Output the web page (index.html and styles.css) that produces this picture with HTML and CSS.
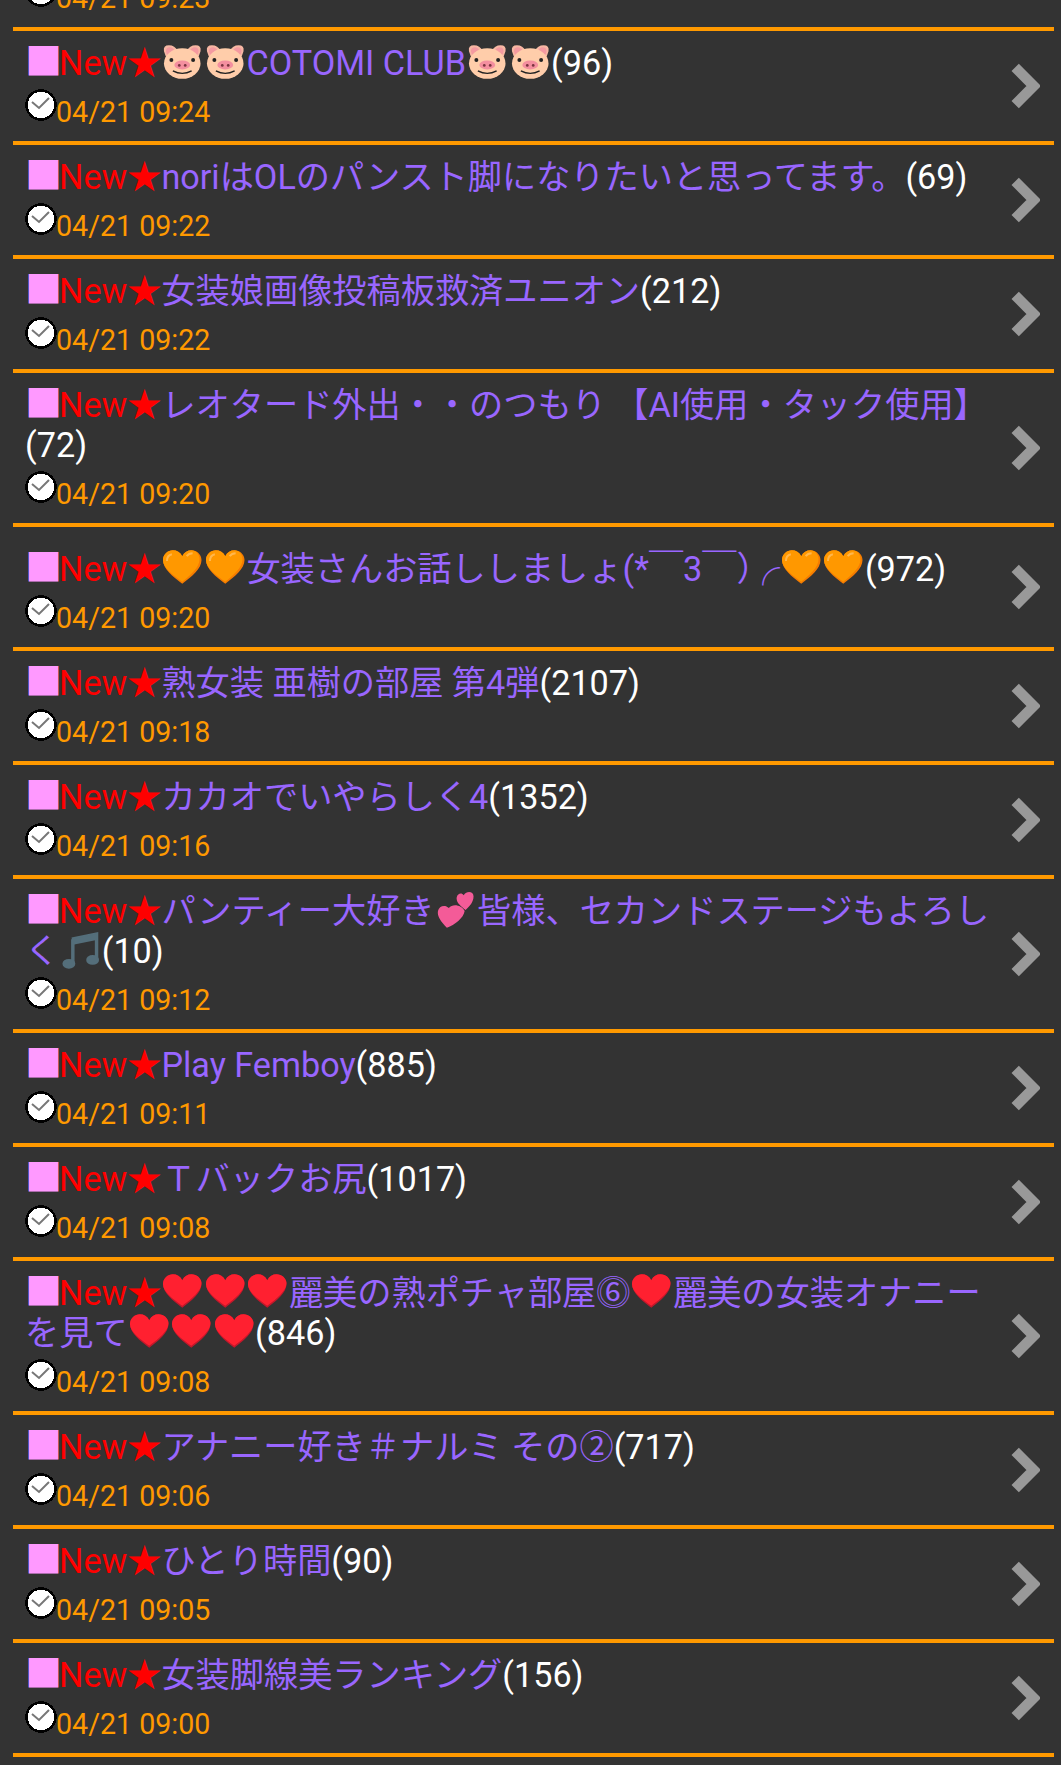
FILE: index.html
```html
<!DOCTYPE html>
<html lang="ja">
<head>
  <meta charset="UTF-8">
  <meta name="viewport" content="width=device-width, initial-scale=1.0">
  <title>New threads</title>
  <link rel="stylesheet" href="styles.css">
</head>
<body>
  <svg class="sprites" xmlns="http://www.w3.org/2000/svg">
    <symbol id="clock" viewBox="0 0 32 32">
      <circle cx="16" cy="16" r="14.500" fill="#fff" stroke="#000" stroke-width="2.500" shape-rendering="crispEdges"/>
      <path d="M7 13 L14 19 L24 9" fill="none" stroke="#777" stroke-width="2"/>
    </symbol>
    <symbol id="chevron" viewBox="0 0 29 46">
      <path d="M5 5 L23 23 L5 41" fill="none" stroke="#999" stroke-width="10" stroke-linejoin="miter"/>
    </symbol>
    <symbol id="pig" viewBox="0 0 43 38">
      <path d="M3 8 Q2 2 8 2 Q14 2 17 8 L8 18 Q4 13 3 8Z M40 8 Q41 2 35 2 Q29 2 26 8 L35 18 Q39 13 40 8Z" fill="#f7b7a3"/>
      <path d="M5 8 Q5 4 9 4 Q12 4 14 8 L8 13 Q5 11 5 8Z M38 8 Q38 4 34 4 Q31 4 29 8 L35 13 Q38 11 38 8Z" fill="#f49aa0"/>
      <ellipse cx="21.500" cy="20.500" rx="18.500" ry="15.500" fill="#ffcdaa"/>
      <ellipse cx="21.500" cy="22" rx="8" ry="4.500" fill="#f48f9f"/>
      <circle cx="18.500" cy="22.500" r="1.400" fill="#7a3440"/>
      <circle cx="24.500" cy="22.500" r="1.400" fill="#7a3440"/>
      <circle cx="10.500" cy="17" r="2" fill="#222"/>
      <circle cx="32.500" cy="17" r="2" fill="#222"/>
      <path d="M12 28 Q21.500 33 31 28" fill="none" stroke="#222" stroke-width="1.400"/>
    </symbol>
    <symbol id="heart-orange" viewBox="0 0 43 38">
      <path d="M21.500 35 C12 28 2 20 2 11 C2 5 7 1 12 1 C16 1 19.500 3 21.500 7 C23.500 3 27 1 31 1 C36 1 41 5 41 11 C41 20 31 28 21.500 35Z" fill="#f57c00"/>
      <path d="M21.500 33 C12 26 2 19 2 11 C2 5 7 1 12 1 C16 1 19.500 3 21.500 7 C23.500 3 27 1 31 1 C35 1 39 5 39 10 C39 19 30 26 21.500 33Z" fill="#ff9800"/>
      <path d="M6 12 Q6 6 11 5" fill="none" stroke="#ffb74d" stroke-width="2"/>
      <path d="M26 7 Q28 4 32 4" fill="none" stroke="#ffb74d" stroke-width="2"/>
    </symbol>
    <symbol id="heart-red" viewBox="0 0 43 38">
      <path d="M21.500 35 C12 28 2 20 2 11 C2 5 7 1 12 1 C16 1 19.500 3 21.500 7 C23.500 3 27 1 31 1 C36 1 41 5 41 11 C41 20 31 28 21.500 35Z" fill="#c2182b"/>
      <path d="M21.500 33 C12 26 2 19 2 11 C2 5 7 1 12 1 C16 1 19.500 3 21.500 7 C23.500 3 27 1 31 1 C36 1 41 5 41 10 C41 18 31 26 21.500 33Z" fill="#ff2030"/>
    </symbol>
    <symbol id="hearts" viewBox="0 0 43 38">
      <path d="M12 37 C6 31 2 25 3 20 C4 15 10 13 14 17 C18 12 27 14 30 20 C29 27 20 34 12 37Z" fill="#f45b98"/>
      <path d="M31 19 C26 15 21 11 22 6 C23 2 27 1 29 4 C32 -1 39 0 39 5 C39 11 35 15 31 19Z" fill="#f45b98"/>
    </symbol>
    <symbol id="notes" viewBox="0 0 43 38">
      <path d="M13 8 L38 3 V29" fill="none" stroke="#546e7a" stroke-width="3.500"/>
      <path d="M13 8 L38 3 V9 L13 14Z" fill="#546e7a"/>
      <path d="M14 8 V33" fill="none" stroke="#546e7a" stroke-width="3.500"/>
      <ellipse cx="10" cy="33" rx="6.500" ry="5" fill="#546e7a"/>
      <ellipse cx="34" cy="29" rx="6.500" ry="5" fill="#546e7a"/>
    </symbol>
  </svg>

  <ul class="thread-list">
    <li class="thread">
      <div class="thread-body">
        <p class="thread-time"><svg class="clock"><use href="#clock"/></svg>04/21 09:23</p>
      </div>
    </li>
    <li class="thread">
      <div class="thread-body">
        <p class="thread-title"><span class="mark">■</span><span class="new">New★</span><span class="name"><svg class="emoji"><use href="#pig"/></svg><svg class="emoji"><use href="#pig"/></svg>COTOMI CLUB<svg class="emoji"><use href="#pig"/></svg><svg class="emoji"><use href="#pig"/></svg></span><span class="count">(96)</span></p>
        <p class="thread-time"><svg class="clock"><use href="#clock"/></svg>04/21 09:24</p>
      </div>
      <svg class="chevron"><use href="#chevron"/></svg>
    </li>
    <li class="thread">
      <div class="thread-body">
        <p class="thread-title"><span class="mark">■</span><span class="new">New★</span><span class="name">noriはOLのパンスト脚になりたいと思ってます。</span><span class="count">(69)</span></p>
        <p class="thread-time"><svg class="clock"><use href="#clock"/></svg>04/21 09:22</p>
      </div>
      <svg class="chevron"><use href="#chevron"/></svg>
    </li>
    <li class="thread">
      <div class="thread-body">
        <p class="thread-title"><span class="mark">■</span><span class="new">New★</span><span class="name">女装娘画像投稿板救済ユニオン</span><span class="count">(212)</span></p>
        <p class="thread-time"><svg class="clock"><use href="#clock"/></svg>04/21 09:22</p>
      </div>
      <svg class="chevron"><use href="#chevron"/></svg>
    </li>
    <li class="thread">
      <div class="thread-body">
        <p class="thread-title"><span class="mark">■</span><span class="new">New★</span><span class="name">レオタード外出・・のつもり 【AI使用・タック使用】</span><span class="count">(72)</span></p>
        <p class="thread-time"><svg class="clock"><use href="#clock"/></svg>04/21 09:20</p>
      </div>
      <svg class="chevron"><use href="#chevron"/></svg>
    </li>
    <li class="thread">
      <div class="thread-body">
        <p class="thread-title thread-title-tall"><span class="mark">■</span><span class="new">New★</span><span class="name"><svg class="emoji"><use href="#heart-orange"/></svg><svg class="emoji"><use href="#heart-orange"/></svg>女装さんお話ししましょ(*￣3￣<span class="tight">）</span>╭<svg class="emoji"><use href="#heart-orange"/></svg><svg class="emoji"><use href="#heart-orange"/></svg></span><span class="count">(972)</span></p>
        <p class="thread-time"><svg class="clock"><use href="#clock"/></svg>04/21 09:20</p>
      </div>
      <svg class="chevron"><use href="#chevron"/></svg>
    </li>
    <li class="thread">
      <div class="thread-body">
        <p class="thread-title"><span class="mark">■</span><span class="new">New★</span><span class="name">熟女装 亜樹の部屋 第4弾</span><span class="count">(2107)</span></p>
        <p class="thread-time"><svg class="clock"><use href="#clock"/></svg>04/21 09:18</p>
      </div>
      <svg class="chevron"><use href="#chevron"/></svg>
    </li>
    <li class="thread">
      <div class="thread-body">
        <p class="thread-title"><span class="mark">■</span><span class="new">New★</span><span class="name">カカオでいやらしく4</span><span class="count">(1352)</span></p>
        <p class="thread-time"><svg class="clock"><use href="#clock"/></svg>04/21 09:16</p>
      </div>
      <svg class="chevron"><use href="#chevron"/></svg>
    </li>
    <li class="thread">
      <div class="thread-body">
        <p class="thread-title"><span class="mark">■</span><span class="new">New★</span><span class="name">パンティー大好き<svg class="emoji"><use href="#hearts"/></svg>皆様、セカンドステージもよろしく<svg class="emoji"><use href="#notes"/></svg></span><span class="count">(10)</span></p>
        <p class="thread-time"><svg class="clock"><use href="#clock"/></svg>04/21 09:12</p>
      </div>
      <svg class="chevron"><use href="#chevron"/></svg>
    </li>
    <li class="thread">
      <div class="thread-body">
        <p class="thread-title"><span class="mark">■</span><span class="new">New★</span><span class="name">Play Femboy</span><span class="count">(885)</span></p>
        <p class="thread-time"><svg class="clock"><use href="#clock"/></svg>04/21 09:11</p>
      </div>
      <svg class="chevron"><use href="#chevron"/></svg>
    </li>
    <li class="thread">
      <div class="thread-body">
        <p class="thread-title"><span class="mark">■</span><span class="new">New★</span><span class="name">Ｔバックお尻</span><span class="count">(1017)</span></p>
        <p class="thread-time"><svg class="clock"><use href="#clock"/></svg>04/21 09:08</p>
      </div>
      <svg class="chevron"><use href="#chevron"/></svg>
    </li>
    <li class="thread">
      <div class="thread-body">
        <p class="thread-title"><span class="mark">■</span><span class="new">New★</span><span class="name"><svg class="emoji"><use href="#heart-red"/></svg><svg class="emoji"><use href="#heart-red"/></svg><svg class="emoji"><use href="#heart-red"/></svg>麗美の熟ポチャ部屋⓺<svg class="emoji"><use href="#heart-red"/></svg>麗美の女装オナニーを見て<svg class="emoji"><use href="#heart-red"/></svg><svg class="emoji"><use href="#heart-red"/></svg><svg class="emoji"><use href="#heart-red"/></svg></span><span class="count">(846)</span></p>
        <p class="thread-time"><svg class="clock"><use href="#clock"/></svg>04/21 09:08</p>
      </div>
      <svg class="chevron"><use href="#chevron"/></svg>
    </li>
    <li class="thread">
      <div class="thread-body">
        <p class="thread-title"><span class="mark">■</span><span class="new">New★</span><span class="name">アナニー好き＃ナルミ その②</span><span class="count">(717)</span></p>
        <p class="thread-time"><svg class="clock"><use href="#clock"/></svg>04/21 09:06</p>
      </div>
      <svg class="chevron"><use href="#chevron"/></svg>
    </li>
    <li class="thread">
      <div class="thread-body">
        <p class="thread-title"><span class="mark">■</span><span class="new">New★</span><span class="name">ひとり時間</span><span class="count">(90)</span></p>
        <p class="thread-time"><svg class="clock"><use href="#clock"/></svg>04/21 09:05</p>
      </div>
      <svg class="chevron"><use href="#chevron"/></svg>
    </li>
    <li class="thread">
      <div class="thread-body">
        <p class="thread-title"><span class="mark">■</span><span class="new">New★</span><span class="name">女装脚線美ランキング</span><span class="count">(156)</span></p>
        <p class="thread-time"><svg class="clock"><use href="#clock"/></svg>04/21 09:00</p>
      </div>
      <svg class="chevron"><use href="#chevron"/></svg>
    </li>
  </ul>
</body>
</html>
```

FILE: styles.css
```css
* { margin: 0; padding: 0; box-sizing: border-box; }

html,
body { height: 100%; overflow: hidden; }

body {
  background-color: #333;
  font-family: Roboto, "Noto Sans CJK JP", sans-serif;
}

.sprites { display: none; }

/* the page is scrolled, so the first row starts above the window */
.thread-list {
  list-style: none;
  margin: -31px 7px 0 13px;
}

.thread {
  display: flex;
  align-items: center;
  border-bottom: 4px solid #ff9900;
  padding: 12px 14px 12px 12px;
}

.thread-body {
  width: 970px;
}

.thread-title {
  font-size: 34.2px;
  line-height: 40px;
  color: #fff;
  margin-bottom: 12px;
}
.thread-title-tall { padding-top: 10px; }

.mark {
  font-size: 37px;
  line-height: 0;
  letter-spacing: -3px;
  color: #ff99ff;
}
.new { color: #ff0000; }
.name { color: #9966ff; }
.count { color: #fff; }
.tight { letter-spacing: -25px; }

.emoji {
  width: 42.5px;
  height: 38px;
  vertical-align: -6px;
}

.thread-time {
  display: flex;
  align-items: flex-end;
  font-size: 28.6px;
  line-height: 34px;
  color: #ff9900;
}

.clock {
  width: 32px;
  height: 32px;
  margin: -6px -1px 8px 0;
}

.chevron {
  width: 30px;
  height: 48px;
  margin-left: auto;
  flex-shrink: 0;
  filter: blur(0.6px);
}
```
